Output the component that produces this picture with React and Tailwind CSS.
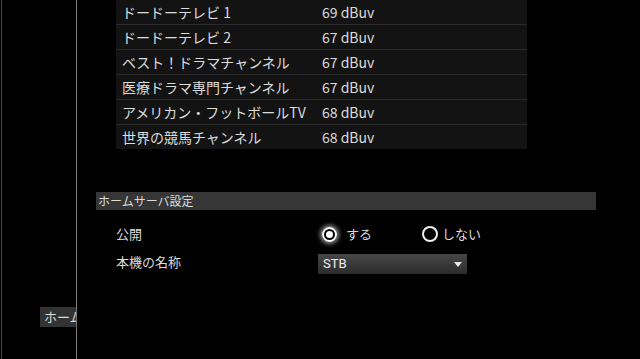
import React from 'react';

const channels = [
  { name: 'ドードーテレビ 1', level: '69 dBuv' },
  { name: 'ドードーテレビ 2', level: '67 dBuv' },
  { name: 'ベスト！ドラマチャンネル', level: '67 dBuv' },
  { name: '医療ドラマ専門チャンネル', level: '67 dBuv' },
  { name: 'アメリカン・フットボールTV', level: '68 dBuv' },
  { name: '世界の競馬チャンネル', level: '68 dBuv' },
];

function Radio({ checked, label, width }) {
  return (
    <div className="flex items-center" style={{ width }}>
      {checked ? (
        <span className="w-[15px] h-[15px] rounded-full border-2 border-white flex items-center justify-center shadow-[0_0_4px_2px_rgba(255,255,255,0.55)]">
          <span className="w-[7px] h-[7px] rounded-full bg-white" />
        </span>
      ) : (
        <span className="w-[16px] h-[16px] rounded-full border-2 border-[#eee]" />
      )}
      <span className={checked ? 'ml-[9px]' : 'ml-[4px]'}>{label}</span>
    </div>
  );
}

export default function App() {
  return (
    <div
      className="w-[640px] h-[359px] bg-black flex overflow-hidden text-[#dcdcdc]"
      style={{ fontFamily: '"Noto Sans CJK JP", "Noto Sans", sans-serif' }}
    >
      <div className="ml-px w-[76px] shrink-0 border-l border-r border-l-[#4a4a4a] border-r-[#7a7a7a] overflow-hidden flex flex-col pt-[307px]">
        <div className="ml-[38px] h-[20px] w-[80px] bg-[#333] pl-[4px] text-[13px] leading-[20px] whitespace-nowrap">
          ホーム
        </div>
      </div>

      <div className="flex-1 flex flex-col">
        <div className="-mt-px ml-[39px] w-[411px] bg-[#131313]">
          {channels.map((c) => (
            <div key={c.name} className="h-[25px] border-t border-[#2c2c2c] flex items-center text-[14px]">
              <span className="w-[206px] pl-[6px] whitespace-nowrap">{c.name}</span>
              <span>{c.level}</span>
            </div>
          ))}
        </div>

        <div className="mt-[43px] ml-[19px] w-[500px] h-[18px] bg-[#363636] pl-[2px] text-[12px] leading-[18px]">
          ホームサーバ設定
        </div>

        <div className="mt-[12px] ml-[39px] h-[24px] flex items-center text-[13px]">
          <span className="w-[206px]">公開</span>
          <Radio checked label="する" width={100} />
          <Radio label="しない" />
        </div>

        <div className="mt-[8px] ml-[39px] h-[20px] flex items-center text-[13px]">
          <span className="w-[202px] -mt-[5px]">本機の名称</span>
          <div className="w-[149px] h-[20px] bg-gradient-to-b from-[#474747] to-[#2c2c2c] flex items-center justify-between pl-[5px] pr-[5px]">
            <span className="text-[#eee]" style={{ fontFamily: 'Roboto, sans-serif' }}>STB</span>
            <svg width="8" height="5" viewBox="0 0 8 5">
              <path d="M0 0 H8 L4 5 Z" fill="#e8e8e8" />
            </svg>
          </div>
        </div>
      </div>
    </div>
  );
}
